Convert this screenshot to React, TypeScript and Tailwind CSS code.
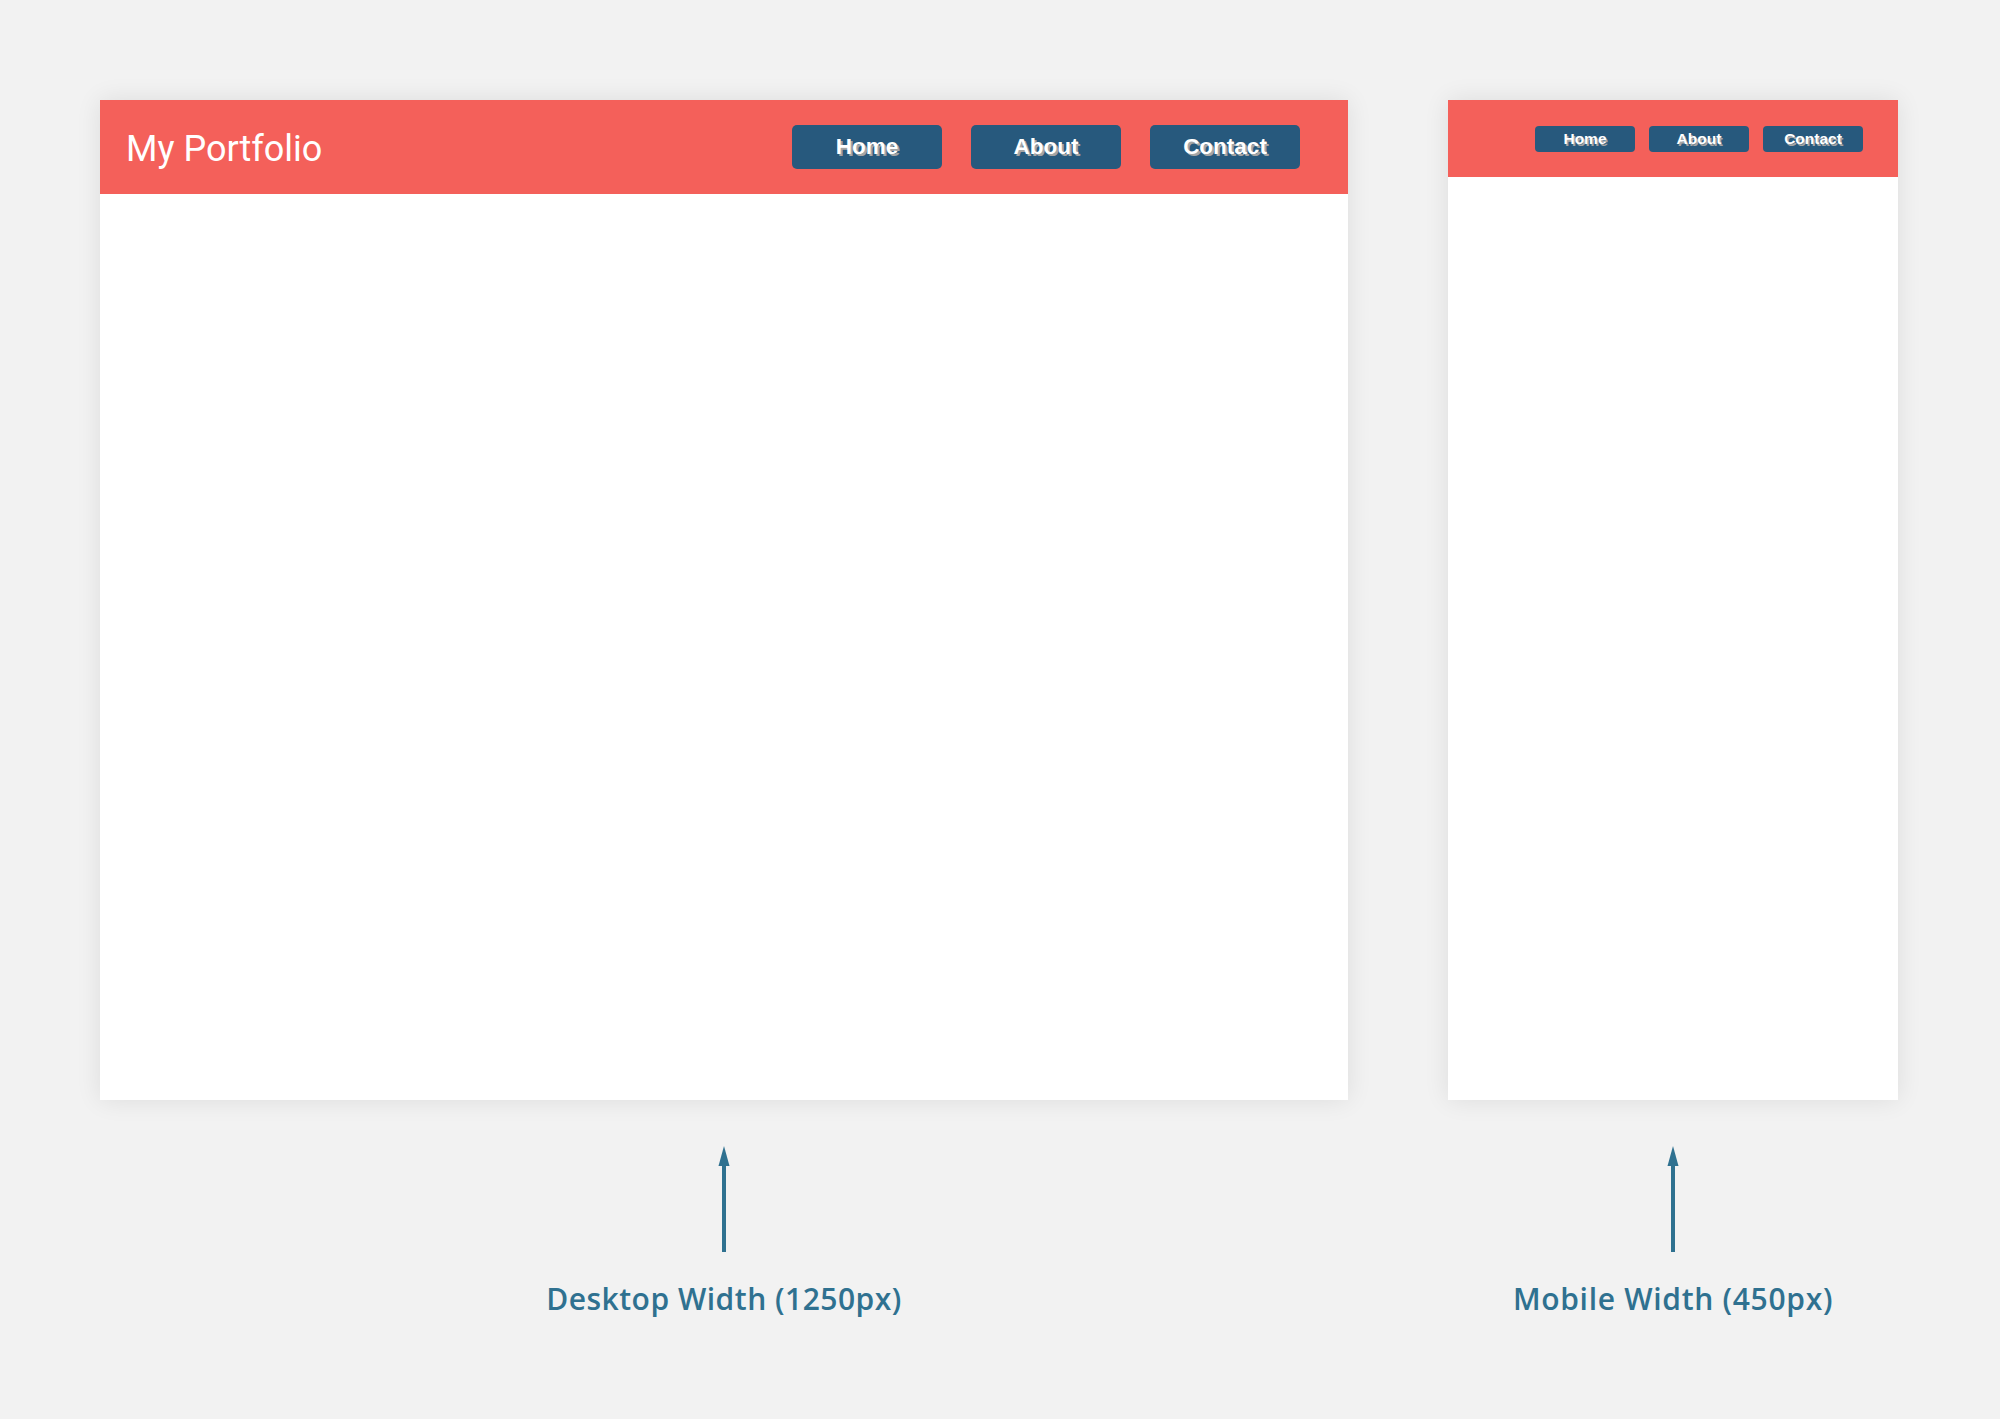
import React from "react";

function Arrow() {
  return (
    <svg width="14" height="108" viewBox="0 0 14 108" className="block">
      <polygon points="7,0 1.5,20 12.5,20" fill="#2f7190" />
      <rect x="5" y="18" width="4" height="88" fill="#2f7190" />
    </svg>
  );
}

function NavButton({ label, mobile }: { label: string; mobile?: boolean }) {
  return mobile ? (
    <button className="w-[100px] h-[26px] rounded-[4px] bg-[#27597d] text-white font-bold text-[15.5px] leading-none [text-shadow:1.5px_1.5px_0_#a5a5a5] [font-family:'Liberation_Sans',Arial,sans-serif]">
      {label}
    </button>
  ) : (
    <button className="w-[150px] h-[44px] rounded-[5px] bg-[#27597d] text-white font-bold text-[22.5px] leading-none [text-shadow:2px_2px_0_#a5a5a5] [font-family:'Liberation_Sans',Arial,sans-serif]">
      {label}
    </button>
  );
}

export default function App() {
  return (
    <div className="min-h-[1419px] w-[2000px] bg-[#f2f2f2] pl-[100px] pt-[100px]">
      <div className="flex gap-[100px]">
        <div className="flex flex-col items-center">
          <div className="w-[1248px] h-[1000px] bg-white shadow-[0_0_24px_rgba(0,0,0,0.09)]">
            <div className="h-[94px] bg-[#f4605a] flex items-center justify-between pl-[26px] pr-[48px]">
              <div className="text-white text-[36px] [font-family:Roboto,sans-serif] leading-none pt-[3px]">My Portfolio</div>
              <div className="flex gap-[29px]">
                <NavButton label="Home" />
                <NavButton label="About" />
                <NavButton label="Contact" />
              </div>
            </div>
          </div>
          <div className="mt-[46px]">
            <Arrow />
          </div>
          <div className="mt-[30px] text-[#2f7190] text-[30px] tracking-[0.5px] font-semibold [font-family:'Open_Sans',sans-serif] leading-none">
            Desktop Width (1250px)
          </div>
        </div>
        <div className="flex flex-col items-center">
          <div className="w-[450px] h-[1000px] bg-white shadow-[0_0_24px_rgba(0,0,0,0.09)]">
            <div className="h-[77px] bg-[#f4605a] flex items-center justify-end pr-[35px] gap-[14px]">
              <NavButton label="Home" mobile />
              <NavButton label="About" mobile />
              <NavButton label="Contact" mobile />
            </div>
          </div>
          <div className="mt-[46px]">
            <Arrow />
          </div>
          <div className="mt-[30px] text-[#2f7190] text-[30px] tracking-[0.7px] font-semibold [font-family:'Open_Sans',sans-serif] leading-none">
            Mobile Width (450px)
          </div>
        </div>
      </div>
    </div>
  );
}
